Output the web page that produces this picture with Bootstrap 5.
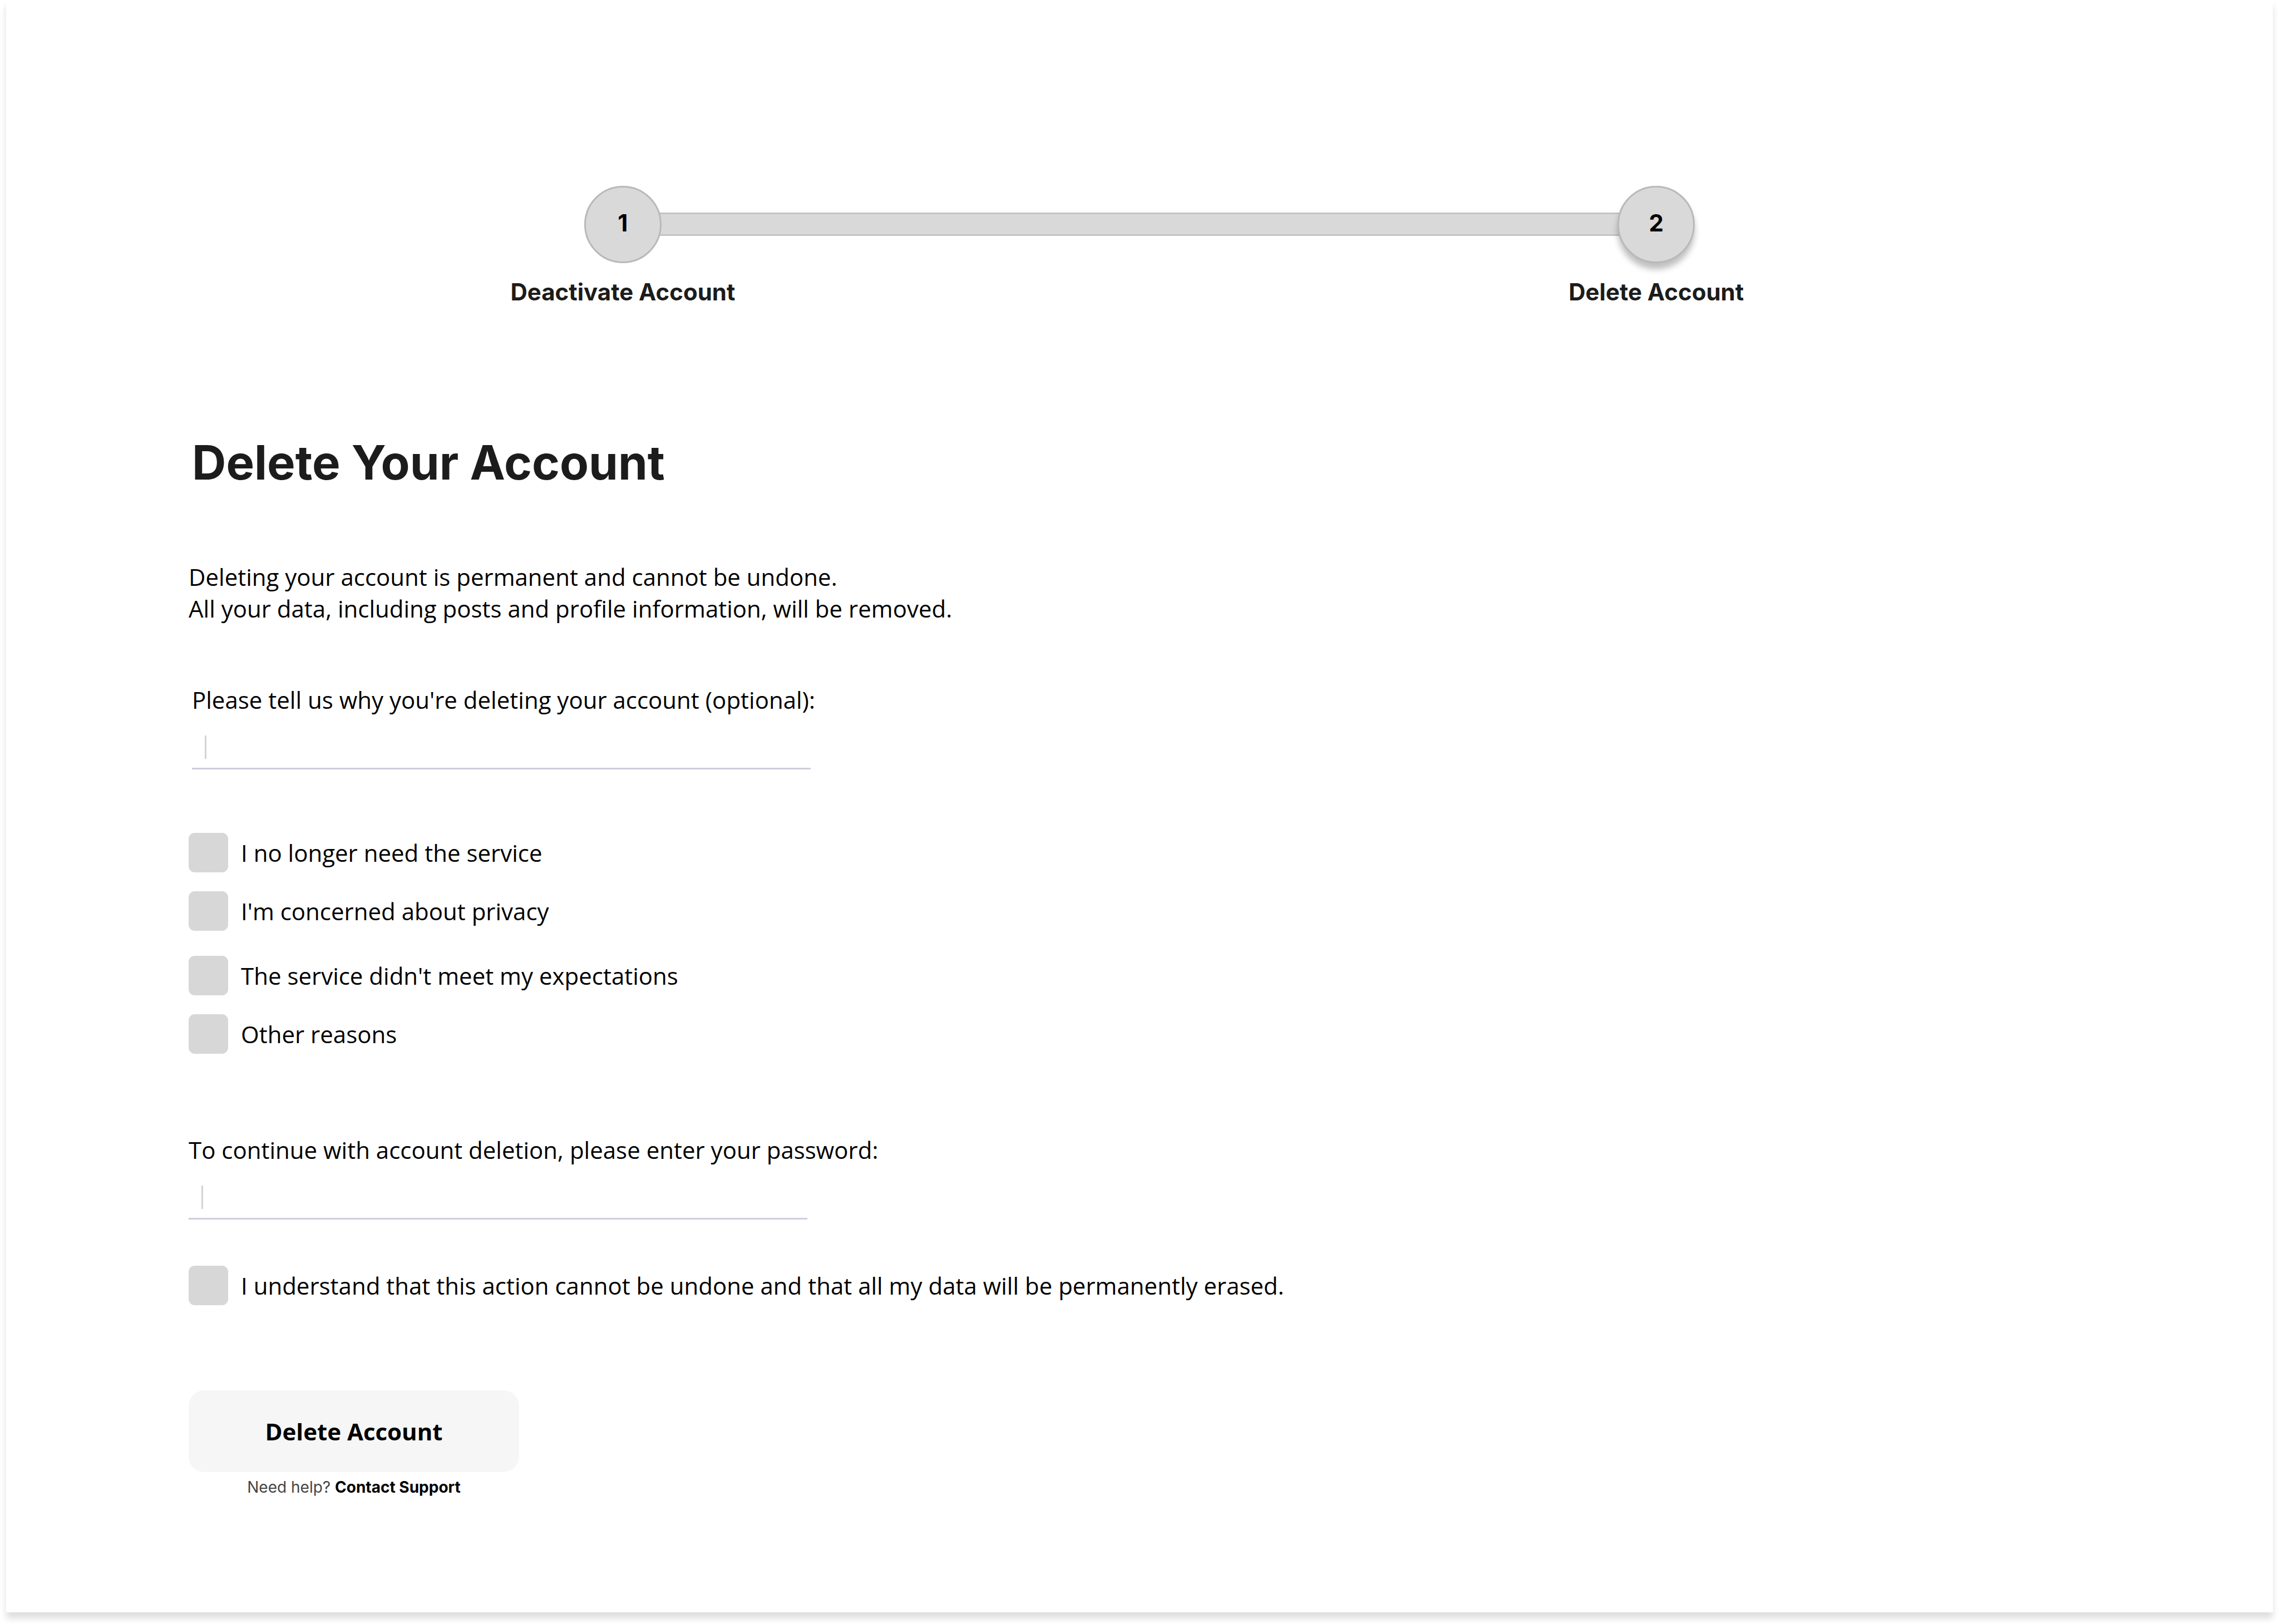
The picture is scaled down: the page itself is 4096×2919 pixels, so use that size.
<!DOCTYPE html>
<html lang="en">
<head>
<meta charset="utf-8">
<meta name="viewport" content="width=device-width, initial-scale=1">
<title>Delete Your Account</title>
<link href="https://cdn.jsdelivr.net/npm/bootstrap@5.3.0/dist/css/bootstrap.min.css" rel="stylesheet">
<style>
  body { font-family: "Open Sans", sans-serif; font-size: 42px; line-height: 57px; color: #000; background: #fff; }
  .font-ui { font-family: Inter, sans-serif; }
  .sheet { margin: 0 11px 22px; min-height: calc(100vh - 22px); padding: 334px 0 208px; background: #fff; box-shadow: 0 11px 11px rgba(0, 0, 0, .13); }

  /* Progress steps */
  .stepper { width: 49%; margin-bottom: 228px; }
  .step { width: 139px; z-index: 1; }
  .step-dot { width: 139px; height: 139px; padding-bottom: 6px; background: #d9d9d9; border: 3px solid #b9b9b9; }
  .step-dot.current { box-shadow: 0 11px 11px rgba(0, 0, 0, .25); }
  .step-label { margin-top: 23px; color: #1c1c1c; }
  .step-bar { height: 42px; margin: 48px -8px 0; background: #d9d9d9; border: solid #c4c4c4; border-width: 3px 0; }

  /* Form */
  .content { padding: 0 328px; }
  .inset { margin-left: 6px; }
  .page-title { font-size: 85px; line-height: 102px; color: #1c1c1c; margin-bottom: 125px; }
  .intro { margin-bottom: 107px; }
  .line-input { width: 1112px; max-width: 100%; height: 97px; padding: 0 22px; font-size: 42px; border: 0; border-bottom: 3px solid #cfcddd; border-radius: 0;
    background: linear-gradient(#d3d3d3, #d3d3d3) 23px 36px / 3px 42px no-repeat; }
  .line-input:focus { box-shadow: none; border-color: #8f8cab; }
  .reasons { margin: 114px 0 144px; gap: 45px; }
  .reason-pair { gap: 34px; }
  .check-row { gap: 23px; min-height: 71px; }
  .check-row .form-check-input { width: 71px; height: 71px; margin: 0; flex: none; border: 0; border-radius: 11px; background-color: #d7d7d7; }
  .check-row .form-check-input:checked { background-color: #6c6c6c; }
  .confirm { margin-top: 83px; }
  .actions { width: 594px; max-width: 100%; margin-top: 153px; }
  .btn-delete { height: 147px; font-size: 42px; line-height: 57px; color: #000; background: #f6f6f6; border: 0; border-radius: 28px; }
  .btn-delete:hover { background: #e9e9e9; }
  .help { margin-top: 10px; font-size: 28px; line-height: 34px; color: #444; }
</style>
</head>
<body>
<main class="sheet">
  <ol class="stepper list-unstyled d-flex mx-auto mt-0 font-ui fw-bold">
    <li class="step d-flex flex-column align-items-center flex-shrink-0">
      <span class="step-dot rounded-circle d-flex align-items-center justify-content-center">1</span>
      <span class="step-label text-nowrap">Deactivate Account</span>
    </li>
    <li class="step-bar flex-grow-1" aria-hidden="true"></li>
    <li class="step d-flex flex-column align-items-center flex-shrink-0" aria-current="step">
      <span class="step-dot current rounded-circle d-flex align-items-center justify-content-center">2</span>
      <span class="step-label text-nowrap">Delete Account</span>
    </li>
  </ol>

  <form class="content">
    <h1 class="page-title inset font-ui fw-bold">Delete Your Account</h1>
    <p class="intro">Deleting your account is permanent and cannot be undone.<br>All your data, including posts and profile information, will be removed.</p>

    <div class="inset">
      <label class="d-block" for="reason">Please tell us why you're deleting your account (optional):</label>
      <input class="form-control line-input" type="text" id="reason">
    </div>

    <div class="reasons d-flex flex-column">
      <div class="reason-pair d-flex flex-column">
        <div class="check-row d-flex align-items-center">
          <input class="form-check-input" type="checkbox" id="r1">
          <label for="r1">I no longer need the service</label>
        </div>
        <div class="check-row d-flex align-items-center">
          <input class="form-check-input" type="checkbox" id="r2">
          <label for="r2">I'm concerned about privacy</label>
        </div>
      </div>
      <div class="reason-pair d-flex flex-column">
        <div class="check-row d-flex align-items-center">
          <input class="form-check-input" type="checkbox" id="r3">
          <label for="r3">The service didn't meet my expectations</label>
        </div>
        <div class="check-row d-flex align-items-center">
          <input class="form-check-input" type="checkbox" id="r4">
          <label for="r4">Other reasons</label>
        </div>
      </div>
    </div>

    <label class="d-block" for="password">To continue with account deletion, please enter your password:</label>
    <input class="form-control line-input" type="password" id="password">

    <div class="check-row confirm d-flex align-items-center">
      <input class="form-check-input" type="checkbox" id="confirm">
      <label for="confirm">I understand that this action cannot be undone and that all my data will be permanently erased.</label>
    </div>

    <div class="actions">
      <button class="btn btn-delete w-100 fw-bold" type="submit">Delete Account</button>
      <p class="help font-ui text-center mb-0">Need help? <a class="text-black fw-bold text-decoration-none" href="#support">Contact Support</a></p>
    </div>
  </form>
</main>
<script src="https://cdn.jsdelivr.net/npm/bootstrap@5.3.0/dist/js/bootstrap.bundle.min.js"></script>
</body>
</html>
